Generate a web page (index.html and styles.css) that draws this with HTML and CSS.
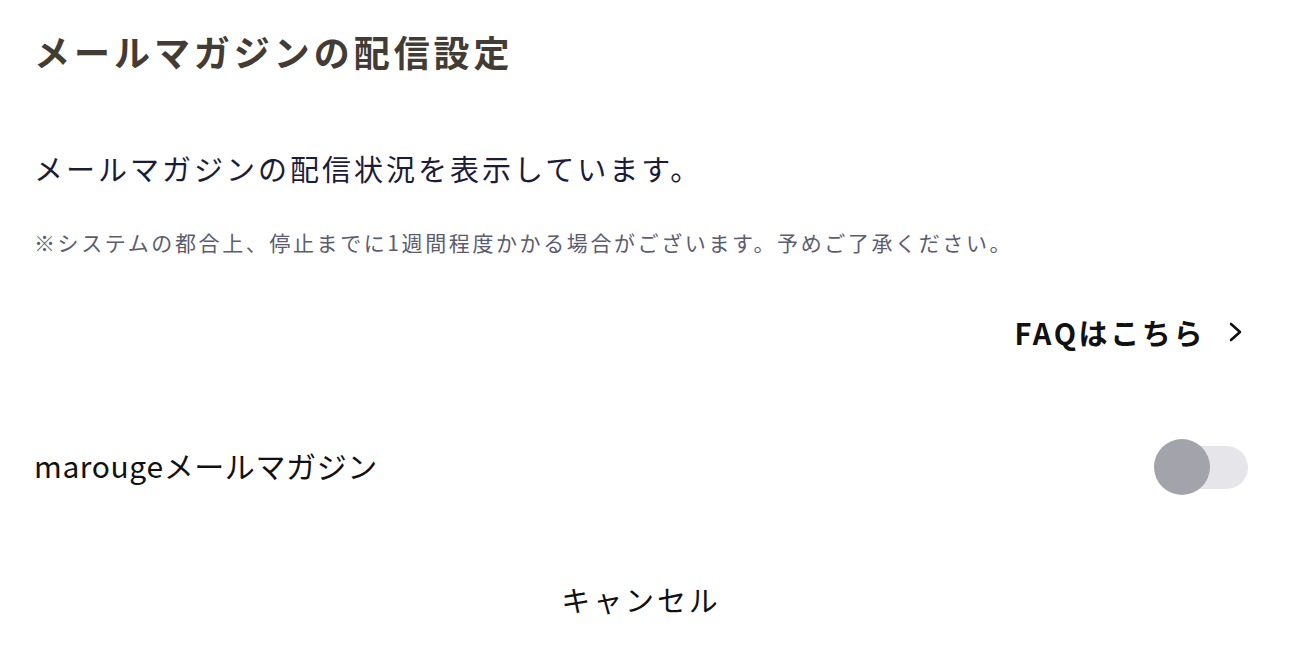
FILE: index.html
```html
<!DOCTYPE html>
<html lang="ja">
<head>
<meta charset="utf-8">
<title>メールマガジンの配信設定</title>
<link rel="stylesheet" href="styles.css">
</head>
<body>
<main class="page">
  <h1 class="title">メールマガジンの配信設定</h1>
  <p class="lead">メールマガジンの配信状況を表示しています。</p>
  <p class="note">※システムの都合上、停止までに1週間程度かかる場合がございます。予めご了承ください。</p>
  <div class="faq-row">
    <a class="faq" href="#"><span>FAQはこちら</span>
      <svg class="chev" width="14" height="22" viewBox="0 0 14 22"><polyline points="2,3 11,11 2,19" fill="none" stroke="#111" stroke-width="2.6" stroke-linecap="round" stroke-linejoin="round"/></svg>
    </a>
  </div>
  <div class="setting-row">
    <span class="setting-label">marougeメールマガジン</span>
    <span class="toggle"><span class="knob"></span></span>
  </div>
  <div class="actions">
    <button class="cancel" type="button">キャンセル</button>
  </div>
</main>
</body>
</html>
```
FILE: styles.css
```css
* { box-sizing: border-box; }
html, body { margin: 0; padding: 0; background: #fff; }
body {
  font-family: "Noto Sans CJK JP", "Noto Sans", sans-serif;
  color: #111;
}
.page {
  padding: 26px 44px 0 34px;
  display: flex;
  flex-direction: column;
}
.title {
  margin: 0;
  font-size: 36px;
  line-height: 50px;
  font-weight: 700;
  letter-spacing: 0.11em;
  color: #433c35;
}
.lead {
  margin: 71px 0 0;
  font-size: 29px;
  line-height: 42px;
  letter-spacing: 3px;
  color: #1c1c38;
}
.note {
  margin: 38px 0 0;
  font-size: 21px;
  line-height: 30px;
  letter-spacing: 2.6px;
  color: #5c5c6e;
}
.faq-row {
  margin-top: 55px;
  display: flex;
  justify-content: flex-end;
}
.faq {
  display: flex;
  align-items: center;
  gap: 24px;
  font-size: 29px;
  line-height: 40px;
  font-weight: 700;
  letter-spacing: 2.6px;
  color: #111;
  text-decoration: none;
  padding-right: 5px;
}
.chev { display: block; }
.setting-row {
  margin-top: 85px;
  display: flex;
  align-items: center;
  justify-content: space-between;
  height: 56px;
}
.setting-label {
  font-size: 30px;
  line-height: 42px;
  letter-spacing: 0.02em;
  color: #111;
}
.toggle {
  position: relative;
  width: 94px;
  height: 43px;
  margin-top: 4px;
  border-radius: 22px;
  background: #e6e6ea;
}
.knob {
  position: absolute;
  left: 0;
  top: -7px;
  width: 56px;
  height: 56px;
  border-radius: 50%;
  background: #a3a3ac;
}
.actions {
  margin-top: 85px;
  display: flex;
  justify-content: center;
}
.cancel {
  border: 0;
  background: none;
  padding: 0;
  font-family: inherit;
  font-size: 29px;
  line-height: 42px;
  letter-spacing: 0.1em;
  color: #111;
}
```
